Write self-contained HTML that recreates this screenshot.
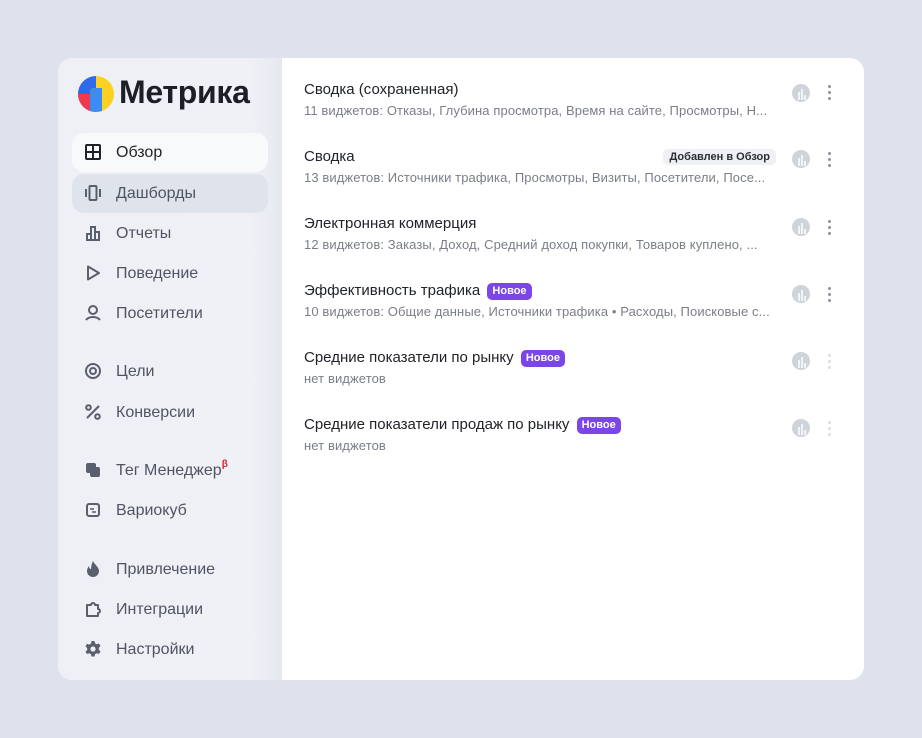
<!DOCTYPE html>
<html><head><meta charset="utf-8"><style>
*{margin:0;padding:0;box-sizing:border-box}
body{width:922px;height:738px;background:#dde2ec;font-family:"Liberation Sans",sans-serif;position:relative;overflow:hidden}
.card{position:absolute;left:58px;top:58px;width:806px;height:622px;border-radius:14px;background:#fff;overflow:hidden}
.side{position:absolute;left:0;top:0;width:224px;height:622px;background:linear-gradient(90deg,#eef0f5 0%,#eff1f6 85%,#e6e9ef 100%);border-right:1px solid #e3e6ec}
.logo{position:absolute;left:20px;top:18px;width:36px;height:36px;border-radius:50%;overflow:hidden;background:#fcd121}
.logo .b{position:absolute;left:0;top:0;width:18px;height:36px;background:#2c6bea}
.logo .r{position:absolute;left:0;top:18px;width:18px;height:18px;background:#ee3a4f}
.logo .w{position:absolute;left:12px;top:12px;width:12px;height:24px;background:#3c8cf5;border-radius:3px 0 0 0}
.lt{position:absolute;left:61px;top:16px;font-size:32px;font-weight:bold;color:#1c1f26;letter-spacing:-0.3px}
.it{position:absolute;left:14px;width:196px;height:39px;border-radius:12px;font-size:16px;color:#4f5463;line-height:39px;padding-left:44px}
.it svg{position:absolute;left:12px;top:10px}
.act{background:#f8f9fb;color:#1f2329}
.sel{background:#dfe3eb}
.row{position:absolute;left:246px;width:472px}
.t{font-size:15px;color:#20232a;height:20px;line-height:20px;white-space:nowrap;position:relative}
.s{font-size:13px;color:#7a7e88;margin-top:3px;white-space:nowrap;letter-spacing:0.1px}
.nb{display:inline-block;background:#7b45e8;color:#fff;font-size:11px;font-weight:bold;padding:0 5px;border-radius:5px;line-height:17px;vertical-align:1px;margin-left:3px}
.pie{position:absolute;left:734px;width:18px;height:18px}
.dots{position:absolute;left:770px;width:4px}
.dots i{display:block;width:3px;height:3px;border-radius:50%;background:#8e939c;margin-bottom:3px}
</style></head><body>
<div class="card">
<div class="side">
<div class="logo"><div class="b"></div><div class="r"></div><div class="w"></div></div>
<div class="lt">Метрика</div>
<div class="it act" style="top:75px"><svg width="18" height="18" viewBox="0 0 18 18" fill="none" stroke="#1f2329" stroke-width="2"><rect x="2" y="2" width="14" height="14" rx="1"/><path d="M9 2v14M2 9h14"/></svg>Обзор</div>
<div class="it sel" style="top:116px"><svg width="18" height="18" viewBox="0 0 18 18" fill="none" stroke="#5a5f6e" stroke-width="2"><rect x="5.5" y="2" width="7" height="14" rx="1"/><path d="M2 5v8M16 5v8"/></svg>Дашборды</div>
<div class="it" style="top:156px"><svg width="18" height="18" viewBox="0 0 18 18" fill="none" stroke="#5a5f6e" stroke-width="2"><path d="M2 16h14M3 16v-6h4v6M7 16V3h4v13M11 16V8h4v8"/></svg>Отчеты</div>
<div class="it" style="top:196px"><svg width="18" height="18" viewBox="0 0 18 18" fill="none" stroke="#5a5f6e" stroke-width="2"><path d="M4 2.5v13l11-6.5z" stroke-linejoin="round"/></svg>Поведение</div>
<div class="it" style="top:236px"><svg width="18" height="18" viewBox="0 0 18 18" fill="none" stroke="#5a5f6e" stroke-width="2"><circle cx="9" cy="6" r="4"/><path d="M2 16c2-2.5 4.5-3 7-3s5 .5 7 3"/></svg>Посетители</div>
<div class="it" style="top:294px"><svg width="18" height="18" viewBox="0 0 18 18" fill="none" stroke="#5a5f6e" stroke-width="2"><circle cx="9" cy="9" r="7"/><circle cx="9" cy="9" r="3"/></svg>Цели</div>
<div class="it" style="top:335px"><svg width="18" height="18" viewBox="0 0 18 18" fill="none" stroke="#5a5f6e" stroke-width="2"><circle cx="4.5" cy="4.5" r="2.3"/><circle cx="13.5" cy="13.5" r="2.3"/><path d="M15 3L3 15"/></svg>Конверсии</div>
<div class="it" style="top:393px"><svg width="18" height="18" viewBox="0 0 18 18" fill="#5a5f6e"><rect x="2" y="2" width="10" height="10" rx="2"/><rect x="6" y="6" width="10" height="10" rx="2"/></svg>Тег Менеджер<sup style="color:#e0202f;font-size:10px;font-weight:bold;vertical-align:8px;line-height:0">β</sup></div>
<div class="it" style="top:433px"><svg width="18" height="18" viewBox="0 0 18 18" fill="none" stroke="#5a5f6e" stroke-width="2"><rect x="3" y="3" width="12" height="12" rx="2"/><path d="M6 8h4M8 11h4" stroke-width="1.6"/></svg>Вариокуб</div>
<div class="it" style="top:492px"><svg width="18" height="18" viewBox="0 0 18 18" fill="#5a5f6e"><path d="M9 1c1 3 6 6 6 10a6 6 0 01-12 0c0-2 1-4 2-5 0 2 1 3 2 3 0-3 1-6 2-8z"/></svg>Привлечение</div>
<div class="it" style="top:532px"><svg width="18" height="18" viewBox="0 0 18 18" fill="none" stroke="#5a5f6e" stroke-width="2" stroke-linejoin="round"><path d="M3 16V5h4a2 2 0 014 0h3v4a2 2 0 010 4v3z"/></svg>Интеграции</div>
<div class="it" style="top:572px"><svg width="18" height="18" viewBox="0 0 18 18" fill="#5a5f6e"><path d="M7.5 1h3l.5 2.3 1.8 1 2.2-.8 1.5 2.6-1.7 1.6v2.1l1.7 1.6-1.5 2.6-2.2-.8-1.8 1-.5 2.3h-3l-.5-2.3-1.8-1-2.2.8L1.5 11.7 3.2 10V8L1.5 6.4 3 3.8l2.2.8 1.8-1z"/><circle cx="9" cy="9" r="2.6" fill="#eef0f5"/></svg>Настройки</div>
</div>

<div class="row" style="top:22px"><div class="t">Сводка (сохраненная)</div><div class="s">11 виджетов: Отказы, Глубина просмотра, Время на сайте, Просмотры, Н...</div></div>
<div class="row" style="top:89px"><div class="t">Сводка<span style="position:absolute;right:0;top:2px;background:#eef0f4;color:#2a2d33;font-size:11px;font-weight:bold;padding:0 6px;border-radius:5px;line-height:16px">Добавлен в Обзор</span></div><div class="s">13 виджетов: Источники трафика, Просмотры, Визиты, Посетители, Посе...</div></div>
<div class="row" style="top:156px"><div class="t">Электронная коммерция</div><div class="s">12 виджетов: Заказы, Доход, Средний доход покупки, Товаров куплено, ...</div></div>
<div class="row" style="top:223px"><div class="t">Эффективность трафика <span class="nb">Новое</span></div><div class="s">10 виджетов: Общие данные, Источники трафика • Расходы, Поисковые с...</div></div>
<div class="row" style="top:290px"><div class="t">Средние показатели по рынку <span class="nb">Новое</span></div><div class="s">нет виджетов</div></div>
<div class="row" style="top:357px"><div class="t">Средние показатели продаж по рынку <span class="nb">Новое</span></div><div class="s">нет виджетов</div></div>

<svg class="pie" style="top:26px" viewBox="0 0 18 18"><circle cx="9" cy="9" r="9" fill="#cfd3da"/><path d="M7 16V8M10 16V5M13 16v-5" stroke="#fff" stroke-width="1.5"/></svg><div class="dots" style="top:27px"><i></i><i></i><i></i></div>
<svg class="pie" style="top:92px" viewBox="0 0 18 18"><circle cx="9" cy="9" r="9" fill="#cfd3da"/><path d="M7 16V8M10 16V5M13 16v-5" stroke="#fff" stroke-width="1.5"/></svg><div class="dots" style="top:94px"><i></i><i></i><i></i></div>
<svg class="pie" style="top:160px" viewBox="0 0 18 18"><circle cx="9" cy="9" r="9" fill="#cfd3da"/><path d="M7 16V8M10 16V5M13 16v-5" stroke="#fff" stroke-width="1.5"/></svg><div class="dots" style="top:162px"><i></i><i></i><i></i></div>
<svg class="pie" style="top:227px" viewBox="0 0 18 18"><circle cx="9" cy="9" r="9" fill="#cfd3da"/><path d="M7 16V8M10 16V5M13 16v-5" stroke="#fff" stroke-width="1.5"/></svg><div class="dots" style="top:229px"><i></i><i></i><i></i></div>
<svg class="pie" style="top:294px" viewBox="0 0 18 18"><circle cx="9" cy="9" r="9" fill="#cfd3da"/><path d="M7 16V8M10 16V5M13 16v-5" stroke="#fff" stroke-width="1.5"/></svg><div class="dots" style="top:296px;opacity:.3"><i></i><i></i><i></i></div>
<svg class="pie" style="top:361px" viewBox="0 0 18 18"><circle cx="9" cy="9" r="9" fill="#cfd3da"/><path d="M7 16V8M10 16V5M13 16v-5" stroke="#fff" stroke-width="1.5"/></svg><div class="dots" style="top:363px;opacity:.3"><i></i><i></i><i></i></div>
</div>
</body></html>
